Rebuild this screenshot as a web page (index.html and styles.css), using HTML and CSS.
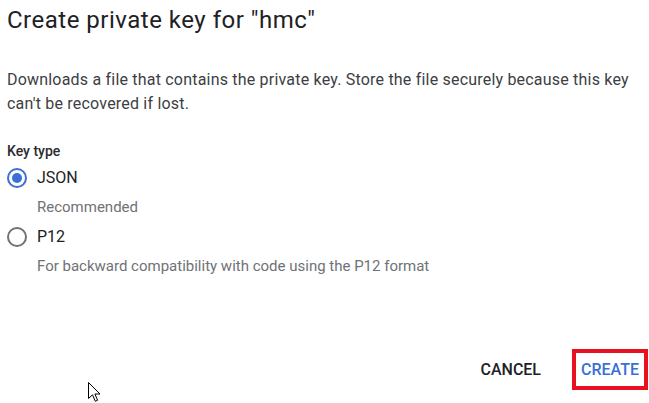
FILE: index.html
```html
<!DOCTYPE html>
<html>
<head>
<meta charset="utf-8">
<link rel="stylesheet" href="styles.css">
</head>
<body>
<div class="dialog">
  <h1 class="title">Create private key for "hmc"</h1>
  <p class="desc">Downloads a file that contains the private key. Store the file securely because this key can't be recovered if lost.</p>
  <div class="group">
    <div class="group-label">Key type</div>
    <div class="option first">
      <span class="radio checked"><span class="dot"></span></span>
      <span class="opt-label">JSON</span>
    </div>
    <div class="hint">Recommended</div>
    <div class="option">
      <span class="radio"></span>
      <span class="opt-label">P12</span>
    </div>
    <div class="hint">For backward compatibility with code using the P12 format</div>
  </div>
  <div class="actions">
    <button class="btn cancel">CANCEL</button>
    <button class="btn create">CREATE</button>
  </div>
</div>
<svg class="cursor" width="14" height="21" viewBox="0 0 14 21">
  <path d="M0.5 0.5 L0.5 16.5 L4.5 12.8 L7.3 19.3 L9.6 18.3 L6.9 12 L12 12 Z" fill="#fff" stroke="#000" stroke-width="1"/>
</svg>
</body>
</html>
```
FILE: styles.css
```css
html, body {
  margin: 0;
  padding: 0;
  background: #fff;
}
body {
  font-family: Roboto, "Liberation Sans", sans-serif;
  color: #202124;
  position: relative;
  width: 649px;
  height: 403px;
  overflow: hidden;
}
.dialog {
  padding: 4px 1px 13px 7px;
  display: flex;
  flex-direction: column;
  height: 403px;
  box-sizing: border-box;
}
.title {
  margin: 0;
  font-size: 24px;
  font-weight: 400;
  line-height: 32px;
  letter-spacing: 0.5px;
  color: #202124;
}
.desc {
  margin: 32px 0 0 0;
  font-size: 16px;
  line-height: 24px;
  letter-spacing: 0.2px;
  color: #3c4043;
  width: 636px;
}
.group {
  margin-top: 25px;
}
.group-label {
  font-size: 14px;
  font-weight: 500;
  line-height: 20px;
  color: #2b2c2f;
}
.option {
  display: flex;
  align-items: center;
  height: 24px;
  line-height: 24px;
  margin-top: 6px;
}
.option.first {
  margin-top: 5px;
}
.radio {
  width: 20px;
  height: 20px;
  box-sizing: border-box;
  border: 2px solid #6f7276;
  border-radius: 50%;
  display: flex;
  align-items: center;
  justify-content: center;
}
.radio.checked {
  border-color: #3a6fd8;
}
.dot {
  width: 10px;
  height: 10px;
  border-radius: 50%;
  background: #3a6fd8;
}
.opt-label {
  margin-left: 10px;
  font-size: 16px;
  color: #202124;
}
.hint {
  margin: 5px 0 0 30px;
  font-size: 15px;
  line-height: 24px;
  color: #6f7276;
}
.actions {
  margin-top: auto;
  display: flex;
  justify-content: flex-end;
  align-items: center;
  gap: 31px;
}
.btn {
  font-family: Roboto, "Liberation Sans", sans-serif;
  font-size: 16px;
  font-weight: 500;
  background: #fff;
  border: 0;
  padding: 0;
}
.cancel {
  color: #202124;
}
.create {
  color: #3a6fd8;
  border: 4px solid #e8111f;
  width: 76px;
  height: 41px;
  box-sizing: border-box;
  padding: 0;
}
.cursor {
  position: absolute;
  left: 88px;
  top: 382px;
}
```
